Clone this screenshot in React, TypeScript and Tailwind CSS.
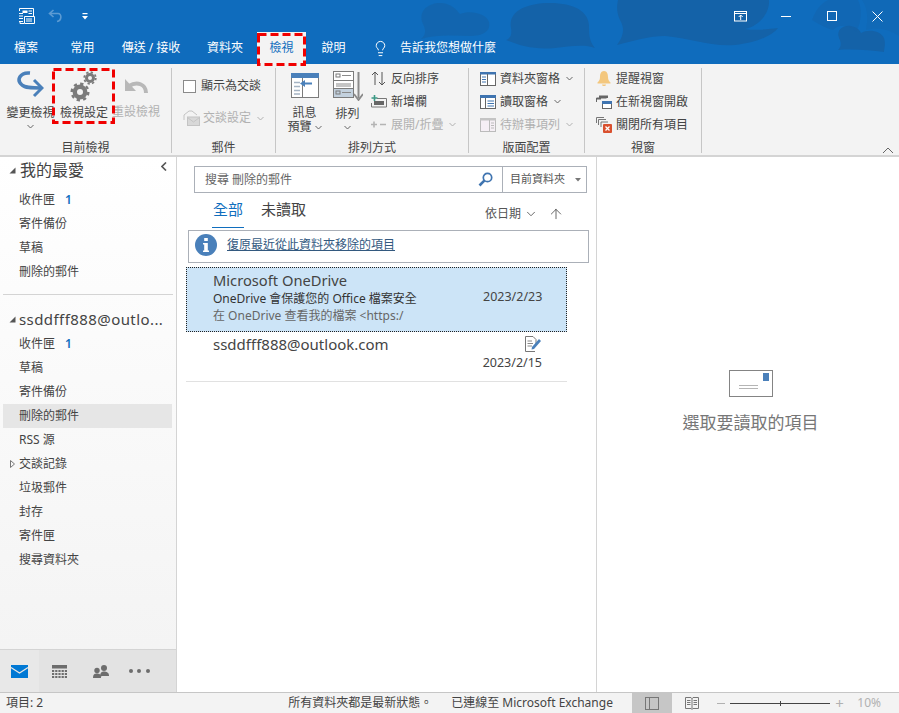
import React from 'react';
import { ChevronDown, Lightbulb, ArrowUp } from 'lucide-react';

const FONT = 'font-["Noto_Sans","Noto_Sans_CJK_TC",sans-serif]';

const Chevron = ({ className = '' }: { className?: string }) => (
  <svg width="7" height="5" viewBox="0 0 7 5" className={className}>
    <path d="M0.5 1 L3.5 4 L6.5 1" fill="none" stroke="currentColor" strokeWidth="1" />
  </svg>
);

const Sep = () => <div className="w-px h-[85px] bg-[#c6c6c6] shrink-0 mt-[4px]" />;

const TitleArt = () => (
  <svg className="absolute inset-0 w-full h-full" viewBox="0 0 899 64">
    <g fill="#1462a8">
      <path d="M421 39 C426 35 426 30 423 24 C417 10 430 2 442 3 C451 4 456 9 460 14 C470 10 486 13 489 22 C491 32 482 36 470 36 C455 36 438 34 421 39 Z" opacity="0.65" />
      <path d="M506 40 C511 38 512 34 511 28 C508 12 525 3 550 3 C575 3 590 12 589 28 C589 36 590 42 595 48 C585 44 570 46 555 48 C535 50 520 46 506 40 Z" />
      <path d="M617 45 C622 38 626 30 620 20 C616 12 617 5 618 0 L769 0 C770 12 760 26 745 29 C755 31 768 29 778 28 C772 36 755 43 735 45 C710 47 690 38 665 36 C650 36 632 41 617 45 Z" />
      <path d="M838 50 C842 46 841 42 839 38 C836 30 843 25 851 26 C856 27 859 29 861 33 C868 29 880 30 884 38 C886 44 884 49 884 52 C870 50 852 49 838 50 Z" />
      <path d="M812 20 C816 10 820 4 828 0 L858 0 C862 8 862 22 856 32 C850 24 838 24 833 30 C826 28 818 24 812 20 Z" opacity="0.45" />
      <path d="M862 0 H899 V36 C890 30 878 26 866 30 C868 20 868 8 862 0 Z" opacity="0.3" />
    </g>
  </svg>
);

const Tab = ({ label, w }: { label: string; w: string }) => (
  <div className={`${w} h-[32px] flex items-center justify-center text-[12px] text-white shrink-0`}>{label}</div>
);

const SmallBtn = ({
  icon,
  label,
  dis,
  chev,
}: {
  icon: React.ReactNode;
  label: string;
  dis?: boolean;
  chev?: boolean;
}) => (
  <div className={`h-[23px] flex items-center gap-[3px] text-[12px] whitespace-nowrap ${dis ? 'text-[#b1b1b1]' : 'text-[#444]'}`}>
    <span className="w-[19px] h-[18px] flex items-center justify-center shrink-0">{icon}</span>
    <span>{label}</span>
    {chev && <Chevron className={`ml-[3px] ${dis ? 'text-[#b1b1b1]' : 'text-[#666]'}`} />}
  </div>
);

const GroupLabel = ({ text }: { text: string }) => (
  <div className="h-[15px] flex items-center justify-center text-[12px] text-[#444]">{text}</div>
);

const NavRow = ({ label, count, selected }: { label: string; count?: string; selected?: boolean }) => (
  <div className={`h-[24px] ml-[3px] mr-[4px] pl-[16px] flex items-center text-[12px] text-[#444] ${selected ? 'bg-[#e6e6e6]' : ''}`}>
    <span>{label}</span>
    {count && <span className="ml-[10px] text-[#106ebe] font-semibold">{count}</span>}
  </div>
);

const Triangle = () => (
  <svg width="7" height="7" viewBox="0 0 7 7" className="shrink-0">
    <path d="M6.5 0.5 V6.5 H0.5 Z" fill="#555" />
  </svg>
);

const MailIcon = () => (
  <svg width="17" height="13" viewBox="0 0 17 13">
    <rect width="17" height="13" fill="#0078d4" />
    <path d="M0 2.5 L8.5 8 L17 2.5" fill="none" stroke="#e6e6e6" strokeWidth="1.2" />
  </svg>
);

// Red dashed marks laid over the tab and the settings button
const DashedMark = ({ className, w, h }: { className: string; w: number; h: number }) => (
  <svg className={`absolute ${className}`} width={w} height={h} viewBox={`0 0 ${w} ${h}`}>
    <rect x="1.5" y="1.5" width={w - 3} height={h - 3} fill="none" stroke="#f00000" strokeWidth="3" strokeDasharray="8 4" />
  </svg>
);

export default function App() {
  return (
    <div className={`w-[899px] h-[713px] flex flex-col overflow-hidden bg-white ${FONT}`}>
      {/* Title and tabs */}
      <div className="relative h-[64px] bg-[#0f6cbd] shrink-0 z-10">
        <TitleArt />
        <div className="relative h-[32px] flex items-center">
          <svg width="17" height="16" viewBox="0 0 17 16" className="ml-[18px]" fill="none" stroke="#fff" strokeWidth="1">
            <path d="M1.5 3 V0.5 H15.5 V9 M1 5.5 H5 M1 8 H5 M1 10.5 H5" />
            <rect x="4.5" y="2.5" width="5" height="2.5" fill="#fff" stroke="none" />
            <path d="M10.5 3 H14 M10.5 5.5 H14 M1 13.5 H5 M6.5 8.5 H16.5 V15.5 H6.5 Z M8 11 H14 M8 13 H14" />
            <path d="M2 13 V15.5 H6" />
          </svg>
          <svg width="16" height="14" viewBox="0 0 16 14" className="ml-[13px]" fill="none" stroke="#5c9bd3" strokeWidth="1.6">
            <path d="M5.5 1 L1.5 4.5 L5.5 8 M2 4.5 H10 C14 4.5 14 11.5 9 12.5" />
          </svg>
          <svg width="6" height="7" viewBox="0 0 6 7" className="ml-[18px]" fill="#fff">
            <rect x="0.5" y="0" width="5" height="1.2" />
            <path d="M0 3 H6 L3 6.5 Z" />
          </svg>
          <div className="flex-1" />
          <svg width="14" height="11" viewBox="0 0 14 11" fill="none" stroke="#fff" strokeWidth="1">
            <rect x="0.5" y="0.5" width="12" height="9.5" />
            <path d="M1 2.5 H12.5 M6.7 9 V4 M4.7 6 L6.7 4 L8.7 6" />
          </svg>
          <div className="w-[10px] h-px bg-white ml-[33px]" />
          <div className="w-[10px] h-[10px] border border-white ml-[36px]" />
          <svg width="11" height="11" viewBox="0 0 11 11" className="ml-[35px] mr-[16px]" stroke="#fff" strokeWidth="1">
            <path d="M0.5 0.5 L10.5 10.5 M10.5 0.5 L0.5 10.5" />
          </svg>
        </div>
        <div className="relative h-[32px] flex items-center">
          <Tab label="檔案" w="w-[52px]" />
          <Tab label="常用" w="w-[61px]" />
          <Tab label="傳送 / 接收" w="w-[76px]" />
          <Tab label="資料夾" w="w-[68px] pl-[4px]" />
          <div className="w-[49px] h-[32px] bg-[#f3f3f3] flex items-center justify-center text-[12px] text-[#106ebe] shrink-0">
            檢視
          </div>
          <Tab label="說明" w="w-[55px]" />
          <Lightbulb size={17} strokeWidth={1.4} className="text-white ml-[11px]" />
          <span className="ml-[11px] text-[12px] text-white">告訴我您想做什麼</span>
        </div>
        <DashedMark className="left-[257px] top-[33px]" w={49} h={33} />
      </div>

      {/* Ribbon */}
      <div className="relative h-[93px] bg-[#f3f3f3] border-b-2 border-[#d4d4d4] flex shrink-0">
        {/* Current view */}
        <div className="w-[171px] flex flex-col shrink-0">
          <div className="h-[76px] flex">
            <div className="w-[53px] flex flex-col items-center pt-[7px] pl-[8px]">
              <svg width="27" height="28" viewBox="0 0 27 28" fill="none" stroke="#4a80ba" strokeWidth="3.5" className="shrink-0">
                <path d="M13 2 C3 1 -1 9 5 14 C8 17 14 17 24 17" />
                <path d="M17 9 L25 17 L17 25" strokeWidth="3" />
              </svg>
              <span className="mt-[5px] text-[12px] text-[#444] whitespace-nowrap">變更檢視</span>
              <Chevron className="mt-[2px] text-[#666]" />
            </div>
            <div className="w-[60px] flex flex-col items-center pt-[7px] pl-[2px]">
              <svg width="28" height="32" viewBox="0 0 28 32" fill="none" stroke="#7b7b7b" className="shrink-0">
                <circle cx="10" cy="21" r="5.2" strokeWidth="4.4" />
                <circle cx="10" cy="21" r="8.3" strokeWidth="2.4" strokeDasharray="3.3 3.2" />
                <circle cx="20" cy="7" r="3.5" strokeWidth="3" />
                <circle cx="20" cy="7" r="5.8" strokeWidth="1.8" strokeDasharray="2.3 2.25" />
              </svg>
              <span className="mt-[1px] text-[12px] text-[#444] whitespace-nowrap">檢視設定</span>
            </div>
            <div className="w-[58px] flex flex-col items-center pt-[14px] pr-[12px]">
              <svg width="24" height="16" viewBox="0 0 24 16" fill="none" stroke="#b8b8b8" strokeWidth="4" className="shrink-0">
                <path d="M22 15 C22 6 13 3 5 8" />
                <path d="M1 1 L1 13 L12 13 Z" fill="#b8b8b8" stroke="none" />
              </svg>
              <span className="mt-[9px] text-[12px] text-[#b1b1b1] whitespace-nowrap">重設檢視</span>
            </div>
          </div>
          <GroupLabel text="目前檢視" />
        </div>
        <Sep />

        {/* Mail */}
        <div className="w-[103px] flex flex-col shrink-0">
          <div className="h-[76px] flex flex-col pl-[11px] pt-[13px] gap-[14px]">
            <div className="flex items-center gap-[5px] text-[12px] text-[#444]">
              <div className="w-[13px] h-[13px] border border-[#8a8a8a] bg-white" />
              <span>顯示為交談</span>
            </div>
            <div className="flex items-center gap-[3px] text-[12px] text-[#b1b1b1]">
              <svg width="17" height="16" viewBox="0 0 17 16" fill="none" stroke="#c4c4c4" strokeWidth="1">
                <path d="M1 10 V5 L6 1 H9 L14 5" />
                <rect x="4.5" y="7" width="12" height="8.5" fill="#d8d8d8" />
                <path d="M4.5 7.5 L10.5 12 L16.5 7.5" />
              </svg>
              <span>交談設定</span>
              <Chevron className="ml-[3px]" />
            </div>
          </div>
          <GroupLabel text="郵件" />
        </div>
        <Sep />

        {/* Arrangement */}
        <div className="w-[192px] flex flex-col shrink-0">
          <div className="h-[76px] flex">
            <div className="w-[57px] flex flex-col items-center pt-[9px]">
              <svg width="28" height="25" viewBox="0 0 28 25" className="shrink-0">
                <rect x="0.5" y="0.5" width="27" height="24" fill="#fff" stroke="#7b7b7b" />
                <rect width="28" height="5" fill="#4a80ba" />
                <path d="M11.5 5 V25" stroke="#7b7b7b" />
                <path d="M3 9.5 H9 M3 13.5 H9 M3 17.5 H9 M3 21 H9" stroke="#a5b4c4" strokeWidth="1.4" />
                <path d="M9 10.5 L14 7 V9.5 H21 V11.5 H14 V14 Z" fill="#4a80ba" />
              </svg>
              <div className="mt-[8px] text-[12px] leading-[14px] text-[#444] text-center whitespace-nowrap">
                訊息
                <br />
                預覽 <Chevron className="inline-block align-middle text-[#666]" />
              </div>
            </div>
            <div className="w-[29px] flex flex-col items-center pt-[7px]">
              <svg width="30" height="30" viewBox="0 0 30 30" className="shrink-0">
                <rect x="0.5" y="0.5" width="20" height="26" fill="#fff" stroke="#7b7b7b" />
                <rect x="1" y="1" width="19" height="7" fill="#fff" />
                <rect x="1" y="18" width="19" height="8" fill="#c3d1de" />
                <rect x="1" y="9" width="19" height="1" fill="#7b7b7b" />
                <rect x="1" y="17" width="19" height="1" fill="#7b7b7b" />
                <rect x="3" y="3" width="4" height="3" fill="none" stroke="#7b7b7b" />
                <rect x="3" y="20" width="4" height="3" fill="none" stroke="#7b7b7b" />
                <path d="M9 4.5 H18 M3 13 H18 M3 15 H18 M9 21.5 H18" stroke="#8a8a8a" />
                <path d="M25.5 1 V27" fill="none" stroke="#8a8a8a" strokeWidth="2" />
                <path d="M21 23 L25.5 29 L30 23" fill="none" stroke="#8a8a8a" strokeWidth="1.8" />
              </svg>
              <span className="mt-[4px] text-[12px] text-[#444] whitespace-nowrap">排列</span>
              <Chevron className="mt-[2px] text-[#666]" />
            </div>
            <div className="pl-[7px] pt-[3px] flex flex-col">
              <SmallBtn
                label="反向排序"
                icon={
                  <svg width="15" height="15" viewBox="0 0 15 15" fill="none" stroke="#555" strokeWidth="1">
                    <path d="M4 14 V1 M1 4 L4 1 L7 4 M11 1 V14 M8 11 L11 14 L14 11" />
                  </svg>
                }
              />
              <SmallBtn
                label="新增欄"
                icon={
                  <svg width="16" height="13" viewBox="0 0 16 13" fill="none">
                    <path d="M6 3.5 H15.5 V12 H0.5 V8" stroke="#777" />
                    <rect x="3" y="6" width="10" height="4" fill="#666" />
                    <path d="M3.5 0 V6 M0.5 3 H6.5" stroke="#3e9a86" strokeWidth="1.6" />
                  </svg>
                }
              />
              <SmallBtn
                dis
                chev
                label="展開/折疊"
                icon={
                  <svg width="15" height="7" viewBox="0 0 15 7" stroke="#b4b4b4" strokeWidth="1.6">
                    <path d="M0 3.5 H6 M3 .5 V6.5 M9 3.5 H15" />
                  </svg>
                }
              />
            </div>
          </div>
          <GroupLabel text="排列方式" />
        </div>
        <Sep />

        {/* Layout */}
        <div className="w-[115px] flex flex-col shrink-0">
          <div className="h-[76px] pl-[9px] pt-[3px] flex flex-col">
            <SmallBtn
              chev
              label="資料夾窗格"
              icon={
                <svg width="16" height="14" viewBox="0 0 16 14">
                  <rect x="0.5" y="0.5" width="15" height="13" fill="#fff" stroke="#666" />
                  <rect width="16" height="2.5" fill="#3f74b0" />
                  <path d="M7.5 2 V14" stroke="#666" />
                  <path d="M2 5 H6 M2 7.5 H6 M2 10 H6" stroke="#3f74b0" />
                </svg>
              }
            />
            <SmallBtn
              chev
              label="讀取窗格"
              icon={
                <svg width="16" height="14" viewBox="0 0 16 14">
                  <rect x="0.5" y="0.5" width="15" height="13" fill="#fff" stroke="#666" />
                  <rect width="16" height="3" fill="#3f74b0" />
                  <path d="M5.5 3 V14" stroke="#666" />
                  <path d="M7.5 6 H14 M7.5 8.5 H14 M7.5 11 H14" stroke="#3f74b0" />
                </svg>
              }
            />
            <SmallBtn
              dis
              chev
              label="待辦事項列"
              icon={
                <svg width="16" height="14" viewBox="0 0 16 14">
                  <rect x="0.5" y="0.5" width="15" height="13" fill="#f5eff5" stroke="#bbb" />
                  <rect width="16" height="2.5" fill="#c4c4c4" />
                  <path d="M9.5 2 V14" stroke="#bbb" />
                  <path d="M11 5 H14 M11 7.5 H14 M11 10 H14" stroke="#bbb" />
                </svg>
              }
            />
          </div>
          <GroupLabel text="版面配置" />
        </div>
        <Sep />

        {/* Window */}
        <div className="w-[116px] flex flex-col shrink-0">
          <div className="h-[76px] pl-[9px] pt-[3px] flex flex-col">
            <SmallBtn
              label="提醒視窗"
              icon={
                <svg width="14" height="16" viewBox="0 0 14 16" fill="#f3c77e">
                  <path d="M7 0 C10 0 11 3 11 6 C11 9 12 10 13.5 11.5 V12.5 H0.5 V11.5 C2 10 3 9 3 6 C3 3 4 0 7 0 Z" />
                  <path d="M5 13.5 H9 C9 15.5 5 15.5 5 13.5 Z" />
                </svg>
              }
            />
            <SmallBtn
              label="在新視窗開啟"
              icon={
                <svg width="16" height="14" viewBox="0 0 16 14" fill="none">
                  <path d="M0.5 7 V3 H10.5" stroke="#666" />
                  <rect x="3" y="0.5" width="9" height="2.5" fill="#666" />
                  <rect x="0" y="3" width="5" height="1.5" fill="#666" />
                  <rect x="6.5" y="6.5" width="9" height="7" fill="#fff" stroke="#666" />
                  <rect x="6" y="6" width="10" height="3" fill="#3f74b0" />
                </svg>
              }
            />
            <SmallBtn
              label="關閉所有項目"
              icon={
                <svg width="16" height="16" viewBox="0 0 16 16" fill="none">
                  <path d="M0.5 6 V0.5 H8" stroke="#777" />
                  <path d="M2.5 8 V2.5 H10 M5 10 V5 H12" stroke="#777" />
                  <rect x="7" y="7" width="9" height="9" rx="1" fill="#d9502e" />
                  <path d="M9.5 9.5 L13.5 13.5 M13.5 9.5 L9.5 13.5" stroke="#fff" strokeWidth="1.3" />
                </svg>
              }
            />
          </div>
          <GroupLabel text="視窗" />
        </div>
        <Sep />

        <svg width="12" height="7" viewBox="0 0 12 7" className="absolute left-[882px] top-[83px] text-[#666]">
          <path d="M1 6 L6 1 L11 6" fill="none" stroke="currentColor" />
        </svg>
        <DashedMark className="left-[52px] top-[4px]" w={63} h={56} />
      </div>

      {/* Body */}
      <div className="flex-1 flex min-h-0">
        {/* Sidebar */}
        <div className="w-[177px] border-r border-[#d4d4d4] flex flex-col shrink-0 bg-gradient-to-b from-white to-[#f3f3f3]">
          <div className="flex-1 flex flex-col">
            <div className="h-[24px] mt-[1px] mb-[6px] flex items-center pl-[9px] pr-[9px] text-[16px] text-[#444]">
              <Triangle />
              <span className="ml-[4px]">我的最愛</span>
              <svg width="6" height="9" viewBox="0 0 6 9" className="ml-auto mb-[7px]">
                <path d="M5 0.5 L1 4.5 L5 8.5" fill="none" stroke="#555" strokeWidth="1.6" />
              </svg>
            </div>
            <NavRow label="收件匣" count="1" />
            <NavRow label="寄件備份" />
            <NavRow label="草稿" />
            <NavRow label="刪除的郵件" />
            <div className="h-px bg-[#d4d4d4] mx-[3px] mt-[10px] mb-[12px]" />
            <div className="h-[25px] flex items-center pl-[9px] text-[15px] text-[#444] whitespace-nowrap">
              <Triangle />
              <span className="ml-[3px] tracking-[0.42px]">ssddfff888@outlo...</span>
            </div>
            <NavRow label="收件匣" count="1" />
            <NavRow label="草稿" />
            <NavRow label="寄件備份" />
            <NavRow label="刪除的郵件" selected />
            <NavRow label="RSS 源" />
            <div className="relative">
              <NavRow label="交談記錄" />
              <svg width="5" height="8" viewBox="0 0 5 8" className="absolute left-[10px] top-[8px]">
                <path d="M.5 .5 L4.5 4 L.5 7.5 Z" fill="none" stroke="#777" />
              </svg>
            </div>
            <NavRow label="垃圾郵件" />
            <NavRow label="封存" />
            <NavRow label="寄件匣" />
            <NavRow label="搜尋資料夾" />
          </div>
          <div className="h-[43px] bg-[#e3e3e3] border-t border-[#d4d4d4] flex items-center shrink-0">
            <div className="w-[39px] h-full bg-[#e8e8e8] flex items-center justify-center">
              <MailIcon />
            </div>
            <div className="w-[41px] flex justify-center">
              <svg width="15" height="13" viewBox="0 0 15 13" fill="#6d6d6d">
                <rect width="15" height="3.5" />
                <path d="M0 5 h2.2 v2 h-2.2 Z M3.2 5 h2.2 v2 h-2.2 Z M6.4 5 h2.2 v2 h-2.2 Z M9.6 5 h2.2 v2 h-2.2 Z M12.8 5 h2.2 v2 h-2.2 Z M0 8 h2.2 v2 h-2.2 Z M3.2 8 h2.2 v2 h-2.2 Z M6.4 8 h2.2 v2 h-2.2 Z M9.6 8 h2.2 v2 h-2.2 Z M12.8 8 h2.2 v2 h-2.2 Z M0 11 h2.2 v2 h-2.2 Z M3.2 11 h2.2 v2 h-2.2 Z M6.4 11 h2.2 v2 h-2.2 Z M9.6 11 h2.2 v2 h-2.2 Z M12.8 11 h2.2 v2 h-2.2 Z" />
              </svg>
            </div>
            <div className="w-[41px] flex justify-center">
              <svg width="16" height="13" viewBox="0 0 16 13" fill="#6d6d6d">
                <circle cx="11" cy="3" r="3" />
                <path d="M7 12 C7 7.5 9 6.5 11 6.5 C13.5 6.5 16 7.5 16 10.5 V11 H9 Z" />
                <circle cx="4" cy="5.5" r="2.7" />
                <path d="M0 13 C0 9 2 8.5 4 8.5 C6 8.5 8 9 8 13 Z" />
              </svg>
            </div>
            <div className="w-[36px] flex justify-center gap-[4.5px]">
              <div className="w-[4px] h-[4px] rounded-full bg-[#6d6d6d]" />
              <div className="w-[4px] h-[4px] rounded-full bg-[#6d6d6d]" />
              <div className="w-[4px] h-[4px] rounded-full bg-[#6d6d6d]" />
            </div>
          </div>
        </div>

        {/* Message list */}
        <div className="w-[420px] border-r border-[#d4d4d4] flex flex-col shrink-0">
          <div className="ml-[17px] mt-[9px] w-[393px] h-[27px] border border-[#abb0b8] flex items-center shrink-0">
            <span className="ml-[10px] text-[12px] text-[#666]">搜尋 刪除的郵件</span>
            <svg width="15" height="15" viewBox="0 0 15 15" fill="none" className="ml-auto mr-[9px]">
              <circle cx="9.5" cy="5.5" r="4.2" stroke="#3f74b0" strokeWidth="1.7" />
              <path d="M6.3 8.7 L1.5 13.5" stroke="#3f74b0" strokeWidth="2.6" />
            </svg>
            <div className="w-px h-full bg-[#abb0b8]" />
            <span className="ml-[7px] text-[11px] text-[#555]">目前資料夾</span>
            <svg width="6" height="4" viewBox="0 0 6 4" className="ml-[10px] mr-[5px]">
              <path d="M0 0 H6 L3 3.5 Z" fill="#777" />
            </svg>
          </div>
          <div className="h-[35px] flex shrink-0 items-start">
            <div className="ml-[35px] w-[32px] h-[35px] border-b border-[#106ebe] text-[15px] text-[#106ebe] text-center leading-[33px]">
              全部
            </div>
            <div className="ml-[17px] text-[15px] text-[#444] leading-[33px]">未讀取</div>
            <div className="ml-auto mr-[32px] mt-[6px] flex items-center text-[12px] text-[#555] h-[30px]">
              依日期
              <ChevronDown size={14} strokeWidth={1.5} className="ml-[3px]" />
              <ArrowUp size={16} strokeWidth={1.2} className="ml-[10px] text-[#444]" />
            </div>
          </div>
          <div className="ml-[11px] mt-[2px] w-[401px] h-[33px] pb-[3px] border border-[#abb0b8] flex items-center shrink-0">
            <div className="ml-[6px] w-[22px] h-[22px] rounded-full bg-[#4a80ba] flex items-center justify-center">
              <svg width="6" height="14" viewBox="0 0 6 14" fill="#fff">
                <rect x="1.2" y="0" width="3.6" height="3" />
                <path d="M0 5 H4.8 V12.4 H6 V14 H0 V12.4 H1.2 V6.6 H0 Z" />
              </svg>
            </div>
            <span className="ml-[10px] text-[12px] text-[#33597f] underline">復原最近從此資料夾移除的項目</span>
          </div>
          <div className="ml-[9px] mt-[4px] w-[381px] h-[65px] bg-[#cce4f7] border border-dotted border-[#222] flex shrink-0">
            <div className="pl-[26px] flex-1 flex flex-col min-w-0">
              <div className="text-[14.7px] leading-[19px] mt-[3px] text-[#444]">Microsoft OneDrive</div>
              <div className="text-[12px] leading-[17px] text-[#333] whitespace-nowrap">OneDrive 會保護您的 Office 檔案安全</div>
              <div className="text-[12px] leading-[18px] text-[#666] whitespace-nowrap">在 OneDrive 查看我的檔案 &lt;https:/</div>
            </div>
            <div className="w-[83px] text-[12.5px] text-[#444] pt-[20px] leading-[18px]">2023/2/23</div>
          </div>
          <div className="ml-[9px] w-[381px] h-[50px] border-b border-[#e1e1e1] flex shrink-0">
            <div className="pl-[27px] flex-1 text-[15px] text-[#444] leading-[20px] pt-[2px]">ssddfff888@outlook.com</div>
            <div className="w-[84px] flex flex-col items-end pr-[25px] pt-[4px]">
              <svg width="17" height="16" viewBox="0 0 17 16" fill="none">
                <path d="M10 15.5 H0.5 V0.5 H8 L11 3.5 V8" stroke="#777" />
                <path d="M2.5 5 H7 M2.5 7.5 H8 M2.5 10 H7" stroke="#888" />
                <path d="M7 11 L14 3 L16 5 L9 13 L6.5 13.5 Z" fill="#4a80ba" />
              </svg>
              <span className="mt-[3px] text-[12.5px] leading-[16px] text-[#444]">2023/2/15</span>
            </div>
          </div>
        </div>

        {/* Reading pane */}
        <div className="flex-1 flex flex-col items-center pt-[213px] pl-[5px]">
          <svg width="44" height="27" viewBox="0 0 44 27">
            <rect x="0.5" y="0.5" width="43" height="26" fill="#fff" stroke="#848484" />
            <rect x="34" y="3" width="6" height="8" fill="#4a80ba" />
            <path d="M10 15.5 H29 M10 18.5 H29" stroke="#b5b5b5" />
          </svg>
          <div className="mt-[13px] text-[17px] text-[#777]">選取要讀取的項目</div>
        </div>
      </div>

      {/* Status bar */}
      <div className="h-[21px] bg-[#f3f3f3] border-t border-[#c6c6c6] flex items-center text-[12px] text-[#444] shrink-0">
        <span className="ml-[6px]">項目: 2</span>
        <span className="ml-[245px]">所有資料夾都是最新狀態。</span>
        <span className="ml-[19px]">已連線至 Microsoft Exchange</span>
        <div className="ml-auto w-[40px] h-full bg-[#c6c6c6] flex items-center justify-center">
          <svg width="14" height="13" viewBox="0 0 14 13" fill="none" stroke="#777">
            <rect x="0.5" y="0.5" width="13" height="12" />
            <path d="M4.5 1 V12" />
          </svg>
        </div>
        <div className="w-[40px] flex justify-center">
          <svg width="14" height="13" viewBox="0 0 14 13" fill="none" stroke="#777">
            <path d="M0.5 0.5 H6 L7 1.5 L8 0.5 H13.5 V11.5 H8 L7 12.5 L6 11.5 H0.5 Z M7 1 V12 M2 3.5 H5.5 M2 5.5 H5.5 M2 7.5 H5.5 M8.5 3.5 H12 M8.5 5.5 H12 M8.5 7.5 H12" />
          </svg>
        </div>
        <div className="w-[8px] h-px bg-[#b1b1b1] ml-[5px]" />
        <div className="relative w-[100px] h-px bg-[#444] ml-[5px]">
          <div className="absolute left-[50px] top-[-2px] w-px h-[5px] bg-[#444]" />
        </div>
        <span className="ml-[5px] w-[9px] text-[15px] leading-none text-[#b1b1b1]">+</span>
        <span className="ml-[13px] mr-[18px] text-[12px] text-[#b1b1b1]">10%</span>
      </div>
    </div>
  );
}
